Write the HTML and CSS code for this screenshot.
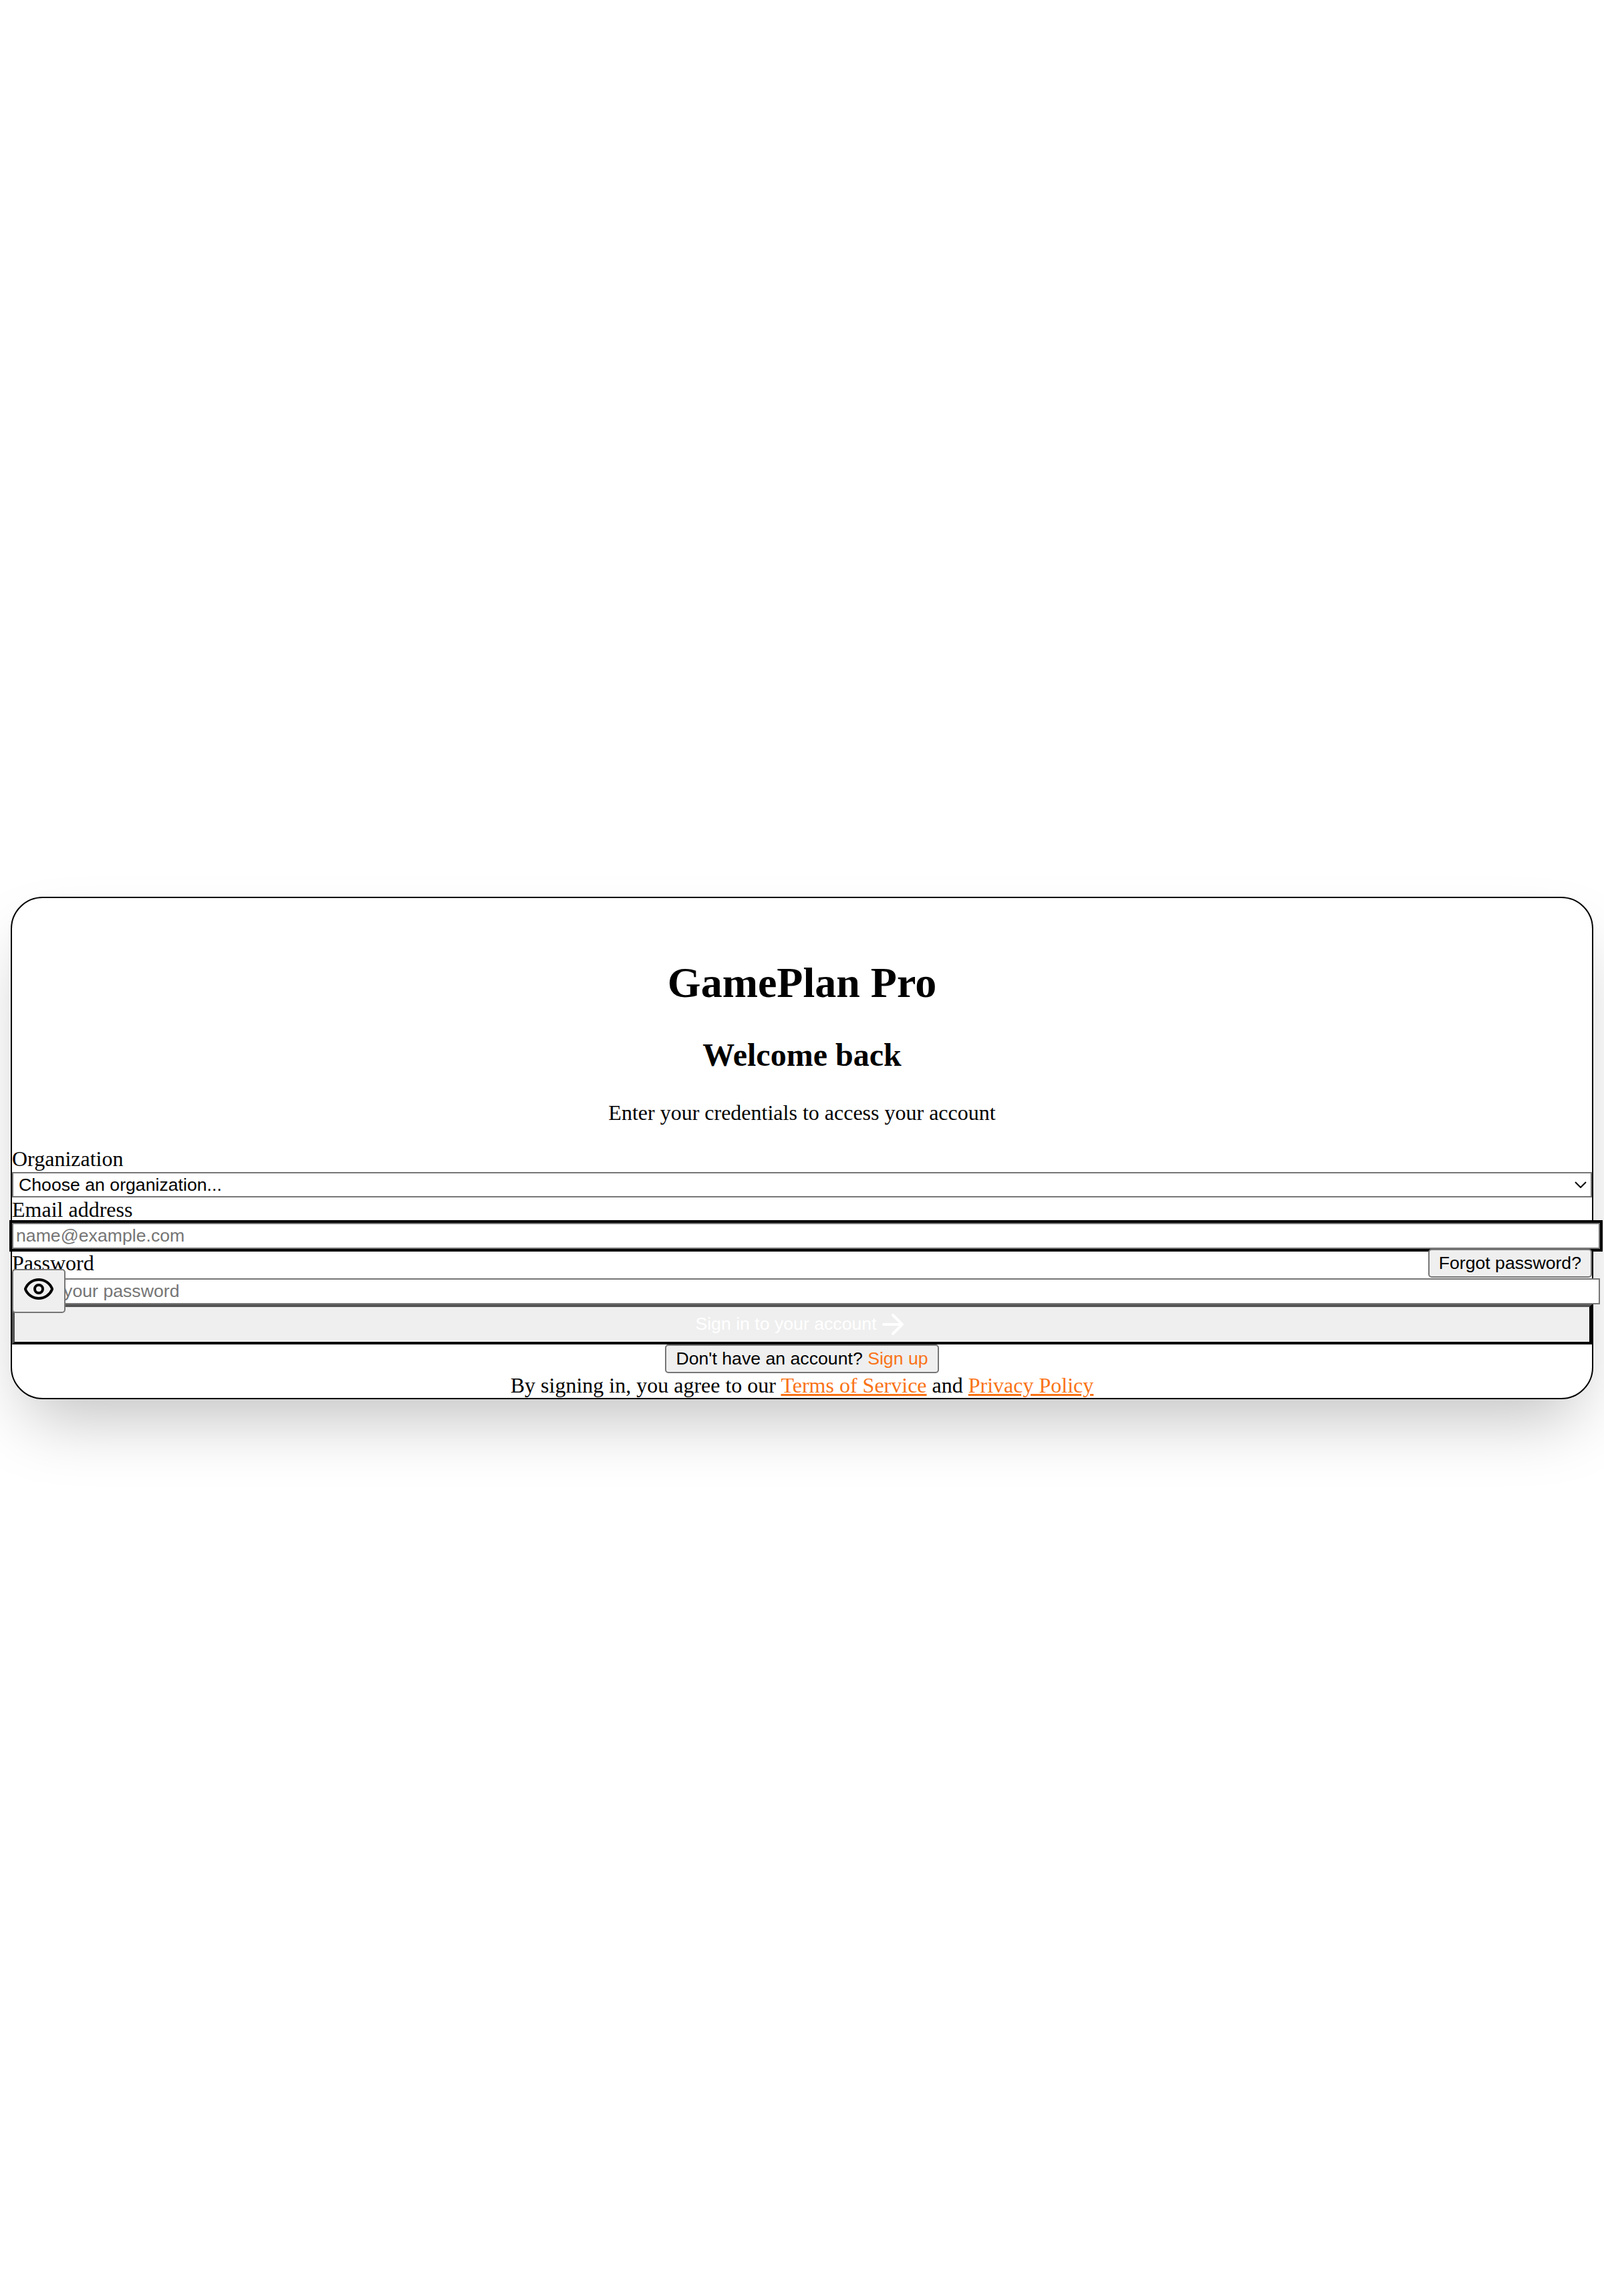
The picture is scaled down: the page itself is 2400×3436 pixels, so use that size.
FILE: index.html
```html
<!DOCTYPE html>
<html lang="en">
<head>
<meta charset="utf-8">
<title>GamePlan Pro</title>
<link rel="stylesheet" href="styles.css">
</head>
<body>
<main class="card">
  <header class="intro">
    <h1>GamePlan Pro</h1>
    <h2>Welcome back</h2>
    <p>Enter your credentials to access your account</p>
  </header>
  <form class="form">
    <label class="label" for="org">Organization</label>
    <div class="select-wrap">
      <select class="select" id="org"><option>Choose an organization...</option></select>
      <svg class="chevron" viewBox="0 0 18 10"><path d="M1 1l8 8 8-8"/></svg>
    </div>
    <label class="label" for="email">Email address</label>
    <input class="input input-focused" id="email" type="email" placeholder="name@example.com">
    <div class="password-row">
      <label class="label" for="password">Password</label>
      <button class="button forgot" type="button">Forgot password?</button>
    </div>
    <div class="password-wrap">
      <input class="input" id="password" type="password" placeholder="Enter your password">
      <button class="button reveal" type="button" aria-label="Show password">
        <svg class="icon" viewBox="0 0 24 24"><path d="M2.062 12.348a1 1 0 0 1 0-.696 10.75 10.75 0 0 1 19.876 0 1 1 0 0 1 0 .696 10.75 10.75 0 0 1-19.876 0"/><circle cx="12" cy="12" r="3"/></svg>
      </button>
    </div>
    <button class="submit" type="button"><span class="submit-text">Sign in to your account</span><svg class="icon" viewBox="0 0 24 24"><path d="M5 12h14M12 5l7 7-7 7"/></svg></button>
  </form>
  <footer class="footer">
    <button class="button signup" type="button">Don't have an account? <span class="accent">Sign up</span></button>
    <p class="terms">By signing in, you agree to our <a href="#">Terms of Service</a> and <a href="#">Privacy Policy</a></p>
  </footer>
</main>
</body>
</html>
```
FILE: styles.css
```css
* { box-sizing: border-box; }
html { overflow: hidden; background: #fff; }
body {
  margin: 0;
  padding: 0 16px;
  height: 3436px;
  display: flex;
  flex-direction: column;
  justify-content: center;
  font: 32px/36px "Liberation Serif", "Times New Roman", serif;
  color: #000;
  overflow: hidden;
}
.card {
  height: 752px;
  border: 2px solid #000;
  border-radius: 48px;
  background: #fff;
  box-shadow: 0 50px 100px -24px rgba(0, 0, 0, .25);
}
.intro { padding-top: 90px; text-align: center; }
h1 { margin: 0; font-size: 64px; line-height: 74px; }
h2 { margin: 44px 0 0; font-size: 48px; line-height: 54px; }
.intro p { margin: 41px 0 33px; }
.form { display: flex; flex-direction: column; }
.label { height: 38px; }
.select, .input, .button, .submit {
  margin: 0;
  font: 26.6667px/30px "Liberation Sans", Arial, sans-serif;
}
.select-wrap { display: grid; align-items: center; }
.select-wrap > * { grid-area: 1 / 1; }
.select {
  appearance: none;
  width: 100%;
  height: 38px;
  padding: 0 8px;
  border: 2px solid #767676;
  border-radius: 0;
  background: #fff;
  color: #000;
}
.chevron {
  width: 18px;
  height: 10px;
  margin-right: 8px;
  justify-self: end;
  fill: none;
  stroke: #000;
  stroke-width: 2;
  pointer-events: none;
}
.input {
  width: calc(100% + 12px);
  height: 39px;
  padding: 2px 4px;
  border: 2px solid #767676;
  border-radius: 0;
  background: #fff;
}
.input::placeholder { color: #757575; opacity: 1; }
.input-focused { outline: 4px solid #000; }
.password-row { display: flex; justify-content: space-between; height: 44px; }
.password-row .label { padding-top: 3px; }
.button {
  height: 43px;
  padding: 0 14px 1px;
  border: 2px solid #767676;
  border-radius: 5px;
  background: #efefef;
  color: #000;
}
.forgot { position: relative; z-index: 1; }
.password-wrap { position: relative; height: 39px; }
.password-wrap .input { display: block; }
.reveal {
  position: absolute;
  z-index: 1;
  left: 0;
  top: -14px;
  width: 80px;
  height: 66px;
  display: flex;
  align-items: flex-start;
  justify-content: center;
  padding: 4px 0 0;
}
.icon {
  flex: none;
  width: 48px;
  height: 48px;
  fill: none;
  stroke: currentColor;
  stroke-width: 2;
  stroke-linecap: round;
  stroke-linejoin: round;
}
.submit {
  display: flex;
  align-items: center;
  justify-content: center;
  height: 60px;
  padding: 0;
  border: 4px solid #000;
  border-top-color: #545454;
  border-left-color: #545454;
  border-radius: 0;
  background: #efefef;
  color: #fff;
}
.submit-text { padding-bottom: 2px; }
.footer { display: flex; flex-direction: column; align-items: center; }
.terms { margin: 0; }
.accent, .terms a { color: #f97316; }
```
